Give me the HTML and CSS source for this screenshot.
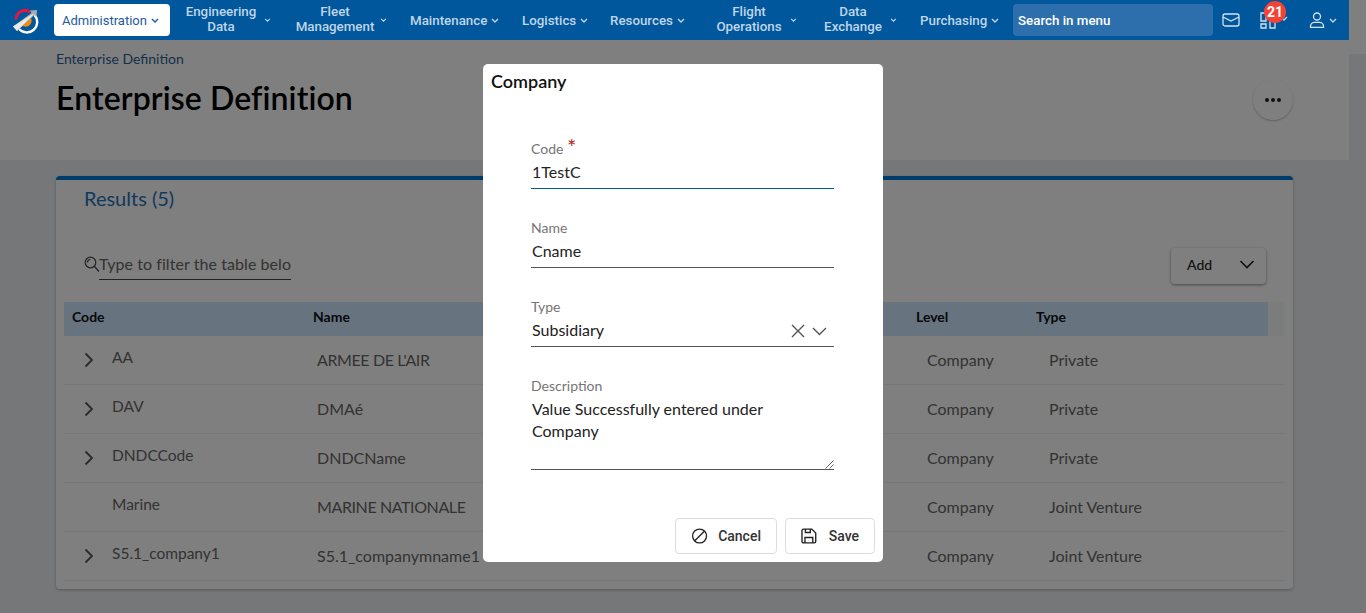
FILE: index.html
```html
<!DOCTYPE html>
<html lang="en">
<head>
<meta charset="utf-8">
<title>Enterprise Definition</title>
<link rel="stylesheet" href="styles.css">
</head>
<body>
<div class="shell">
  <div class="page">
    <nav class="nav">
      <a class="logo" aria-label="Logo">
        <svg width="28" height="28" viewBox="0 0 28 28">
          <path d="M5 13.500A9 9 0 0 1 19 6" fill="none" stroke="#e5173f" stroke-width="3"/>
          <path d="M23.500 9A9.800 9.800 0 0 1 8 23" fill="none" stroke="#fff" stroke-width="2.400"/>
          <path d="M10 18.500a6 6 0 0 0 10-6.500z" fill="#f58a07"/>
          <path d="M2 20.500 20.500 7l-1.500-2.500 7-.5-.5 7-2-2L6 25z" fill="#a9acb0"/>
          <path d="M2 20.500 20 9l3.500-1.500L6 25z" fill="#e8e9ea"/>
        </svg>
      </a>
      <a class="nav-item active">Administration<svg class="chev" viewBox="0 0 8 5"><path d="M1 1l3 3 3-3"/></svg></a>
      <a class="nav-item eng"><span class="wrap">Engineering Data</span><svg class="chev small" viewBox="0 0 8 5"><path d="M1 1l3 3 3-3"/></svg></a>
      <a class="nav-item fleet"><span class="wrap">Fleet Management</span><svg class="chev small" viewBox="0 0 8 5"><path d="M1 1l3 3 3-3"/></svg></a>
      <a class="nav-item maint">Maintenance<svg class="chev" viewBox="0 0 8 5"><path d="M1 1l3 3 3-3"/></svg></a>
      <a class="nav-item logi">Logistics<svg class="chev" viewBox="0 0 8 5"><path d="M1 1l3 3 3-3"/></svg></a>
      <a class="nav-item res">Resources<svg class="chev" viewBox="0 0 8 5"><path d="M1 1l3 3 3-3"/></svg></a>
      <a class="nav-item flight"><span class="wrap">Flight Operations</span><svg class="chev small" viewBox="0 0 8 5"><path d="M1 1l3 3 3-3"/></svg></a>
      <a class="nav-item data"><span class="wrap">Data Exchange</span><svg class="chev small" viewBox="0 0 8 5"><path d="M1 1l3 3 3-3"/></svg></a>
      <a class="nav-item purch">Purchasing<svg class="chev" viewBox="0 0 8 5"><path d="M1 1l3 3 3-3"/></svg></a>
      <div class="nav-search">Search in menu</div>
      <div class="nav-tools">
        <svg class="tool mail" width="18" height="14" viewBox="0 0 18 14"><path d="M3 1h12a2 2 0 0 1 2 2v8a2 2 0 0 1-2 2H3a2 2 0 0 1-2-2V3a2 2 0 0 1 2-2zM1 4l8 4 8-4" fill="none" stroke="#d5e3f0" stroke-width="1.300"/></svg>
        <div class="tool apps">
          <svg width="16" height="17" viewBox="0 0 16 17"><path d="M1 1h5v8H1zM10 1h5v5h-5zM1 12h5v4H1zM10 9h5v7h-5z" fill="none" stroke="#d5e3f0" stroke-width="1.300"/></svg>
          <svg class="chev apps-chev" viewBox="0 0 8 5"><path d="M1 1l3 3 3-3"/></svg>
          <span class="badge">21</span>
        </div>
        <div class="tool user">
          <svg width="16" height="16" viewBox="0 0 16 16"><circle cx="8" cy="4.500" r="3.500" fill="none" stroke="#d5e3f0" stroke-width="1.300"/><path d="M1.500 15.300v-1c0-2.500 2-4 4-4h5c2 0 4 1.500 4 4v1z" fill="none" stroke="#d5e3f0" stroke-width="1.300"/></svg>
          <svg class="chev" viewBox="0 0 8 5"><path d="M1 1l3 3 3-3"/></svg>
        </div>
      </div>
    </nav>

    <header class="head">
      <div class="crumb">Enterprise Definition</div>
      <h1 class="title">Enterprise Definition</h1>
      <button class="more" aria-label="More"><span></span><span></span><span></span></button>
    </header>

    <section class="card">
      <h2 class="results">Results (5)</h2>
      <div class="tools-row">
        <div class="filter">
          <svg width="16" height="17" viewBox="0 0 16 17"><circle cx="6.500" cy="6.500" r="5.300" fill="none" stroke="#444" stroke-width="1.200"/><path d="M3.500 6.500a3 3 0 0 1 3-3M10.500 10.500l4.500 5" fill="none" stroke="#444" stroke-width="1.200"/></svg>
          <span class="filter-input">Type to filter the table belo</span>
        </div>
        <button class="add">Add<svg width="16" height="9" viewBox="0 0 16 9"><path d="M1.500 1l6.500 6.500L14.500 1" fill="none" stroke="#222" stroke-width="1.600"/></svg></button>
      </div>
      <div class="table">
        <div class="thead">
          <span class="th c1">Code</span><span class="th c2">Name</span><span class="th c3">Level</span><span class="th c4">Type</span>
        </div>
        <div class="row"><span class="exp"><svg width="10" height="16" viewBox="0 0 10 16"><path d="M1.500 1.500 8 8l-6.500 6.500" fill="none" stroke="#555" stroke-width="1.800"/></svg></span><span class="code">AA</span><span class="name caps">ARMEE DE L'AIR</span><span class="level">Company</span><span class="kind">Private</span></div>
        <div class="row"><span class="exp"><svg width="10" height="16" viewBox="0 0 10 16"><path d="M1.500 1.500 8 8l-6.500 6.500" fill="none" stroke="#555" stroke-width="1.800"/></svg></span><span class="code">DAV</span><span class="name">DMAé</span><span class="level">Company</span><span class="kind">Private</span></div>
        <div class="row"><span class="exp"><svg width="10" height="16" viewBox="0 0 10 16"><path d="M1.500 1.500 8 8l-6.500 6.500" fill="none" stroke="#555" stroke-width="1.800"/></svg></span><span class="code">DNDCCode</span><span class="name">DNDCName</span><span class="level">Company</span><span class="kind">Private</span></div>
        <div class="row"><span class="exp"></span><span class="code">Marine</span><span class="name caps">MARINE NATIONALE</span><span class="level">Company</span><span class="kind">Joint Venture</span></div>
        <div class="row"><span class="exp"><svg width="10" height="16" viewBox="0 0 10 16"><path d="M1.500 1.500 8 8l-6.500 6.500" fill="none" stroke="#555" stroke-width="1.800"/></svg></span><span class="code">S5.1_company1</span><span class="name">S5.1_companymname1</span><span class="level">Company</span><span class="kind">Joint Venture</span></div>
      </div>
    </section>
  </div>
  <div class="gutter"></div>
</div>

<div class="overlay"></div>

<div class="modal" role="dialog">
  <h3 class="modal-title">Company</h3>
  <form class="form">
    <div class="field focus">
      <div class="label">Code <i class="req">*</i></div>
      <div class="value">1TestC</div>
    </div>
    <div class="field">
      <div class="label">Name</div>
      <div class="value">Cname</div>
    </div>
    <div class="field">
      <div class="label">Type</div>
      <div class="value select">Subsidiary
        <span class="select-icons">
          <svg width="14" height="14" viewBox="0 0 14 14"><path d="M1 1l12 12M13 1 1 13" fill="none" stroke="#555" stroke-width="1.400"/></svg>
          <svg width="15" height="9" viewBox="0 0 15 9"><path d="M1 1l6.500 6.500L14 1" fill="none" stroke="#555" stroke-width="1.400"/></svg>
        </span>
      </div>
    </div>
    <div class="field">
      <div class="label">Description</div>
      <div class="value area">Value Successfully entered under Company
        <svg class="grip" width="9" height="9" viewBox="0 0 9 9"><path d="M8.500 .5 .5 8.500M8.500 4.500l-4 4" fill="none" stroke="#666"/></svg>
      </div>
    </div>
  </form>
  <div class="actions">
    <button class="btn cancel">
      <svg width="18" height="18" viewBox="0 0 18 18"><circle cx="9" cy="9" r="7.300" fill="none" stroke="#222" stroke-width="1.400"/><path d="M14 4 4 14" stroke="#222" stroke-width="1.400"/></svg>Cancel</button>
    <button class="btn save">
      <svg width="16" height="16" viewBox="0 0 16 16"><path d="M1 2.500A1.500 1.500 0 0 1 2.500 1H11l4 4v8.500a1.500 1.500 0 0 1-1.500 1.500h-11A1.500 1.500 0 0 1 1 13.500zM4 15V9.500h8V15M4.500 1v3.500h5V1" fill="none" stroke="#222" stroke-width="1.400"/></svg>Save</button>
  </div>
</div>
</body>
</html>
```

FILE: styles.css
```css
* { box-sizing: border-box; }
html, body { margin: 0; height: 613px; overflow: hidden; }
body { font-family: "Lato", "Liberation Sans", sans-serif; color: #222; background: #eaeef2; }

.shell { display: flex; height: 613px; }
.page { width: 1349px; flex: none; height: 613px; overflow: hidden; }
.gutter { flex: 1; height: 54px; background: #fff; }

/* top navigation (stays above the dim layer) */
.nav {
  position: relative; z-index: 3;
  display: flex; align-items: center;
  width: 1349px; height: 40px; padding-left: 11px;
  background: #01579b;
  font: 500 13.333px/15px "Roboto", "Liberation Sans", sans-serif;
  color: #bfd5e9;
}
.logo { display: flex; width: 43px; flex: none; }
.nav-item { display: flex; align-items: center; flex: none; height: 32px; white-space: nowrap; }
.wrap { display: block; width: 100px; margin-bottom: 2px; white-space: normal; text-align: center; }
.chev { width: 8px; height: 5px; margin-left: 4px; fill: none; stroke: currentColor; stroke-width: 1.400; flex: none; }
.chev.small { width: 7px; height: 4px; }
.active { width: 116px; padding-left: 8px; background: #fff; color: #1e5aa0; border-radius: 4px; font-size: 13px; font-weight: 400; }
.eng { width: 115px; padding-left: 1px; }
.eng .chev { margin-left: -7px; }
.fleet { width: 125px; padding-left: 0; }
.fleet .chev { margin-left: -5px; }
.maint { width: 112px; }
.logi { width: 88px; }
.res { width: 106px; }
.flight { width: 107px; }
.flight .wrap { width: 66px; }
.flight .chev { margin-left: 8px; }
.data { width: 97px; }
.data .wrap { width: 60px; }
.data .chev { margin-left: 7px; }
.purch { width: 93px; }
.nav-search {
  width: 200px; height: 32px; flex: none; padding-left: 5px;
  display: flex; align-items: center;
  background: #2d6fad; color: #fff; border-radius: 4px;
}
.nav-tools { display: flex; align-items: center; flex: 1; }
.tool { flex: none; }
.mail { margin-left: 9px; }
.apps { position: relative; display: flex; align-items: center; margin-left: 20px; }
.apps-chev { margin-left: 4px; margin-top: -4px; }
.badge {
  position: absolute; left: 4px; top: -11px;
  width: 22px; height: 22px; border-radius: 50%;
  background: #f44336; color: #fff;
  font: 700 14px/22px "Roboto", sans-serif; text-align: center;
}
.user { display: flex; align-items: center; margin-left: 21px; }
.user .chev { margin-left: 4px; }

/* page header */
.head { position: relative; height: 120px; background: #fff; padding: 10px 56px 0; }
.crumb { font-size: 14px; line-height: 18px; color: #2b5f96; }
.title { margin: 10px 0 0; font-size: 32px; line-height: 40px; font-weight: 600; letter-spacing: .1px; color: #000; }
.more {
  position: absolute; left: 1253px; top: 40px;
  display: flex; align-items: center; justify-content: center; gap: 2px;
  width: 40px; height: 40px; padding: 0; border: 0; border-radius: 50%;
  background: #fff; box-shadow: 0 1px 2px rgba(0,0,0,.25);
}
.more span { width: 4px; height: 4px; border-radius: 50%; background: #222; }

/* results card */
.card {
  margin: 16px 0 0 56px; width: 1237px; height: 413px;
  background: #fff; border-top: 4px solid #0178d4; border-radius: 4px;
  box-shadow: 0 1px 3px rgba(0,0,0,.25);
  padding: 0 8px;
}
.results { margin: 6px 0 0 20px; font-size: 20px; line-height: 24px; font-weight: 400; color: #1f74b8; }
.tools-row { display: flex; justify-content: space-between; align-items: flex-start; margin-top: 38px; padding: 0 19px 0 20px; }
.filter { display: flex; padding-top: 5px; }
.filter svg { margin-top: 3px; }
.filter-input { display: block; width: 192px; height: 27px; margin-top: 0; margin-left: -1px; white-space: nowrap; font-size: 16px; line-height: 22px; letter-spacing: .07px; color: #666; border-bottom: 1px solid #444; }
.add {
  display: flex; align-items: center; justify-content: space-between;
  width: 95px; height: 36px; padding: 0 11px 3px 16px; border: 0; border-radius: 4px;
  background: #fff; box-shadow: 0 1px 3px rgba(0,0,0,.45);
  font: 500 14px "Lato", sans-serif; color: #222;
}
.table { margin-top: 18px; width: 1221px; }
.thead {
  display: flex; height: 34px; padding-bottom: 6px; align-items: center; width: 1221px;
  background: linear-gradient(to right, #cee6ff 1204px, #f6f9f9 1204px);
}
.th { font-size: 14px; font-weight: 700; color: #111; }
.th.c1 { width: 241px; margin-left: 8px; }
.th.c2 { width: 603px; }
.th.c3 { width: 120px; }
.row {
  display: flex; height: 49px; padding-bottom: 2px; align-items: center; border-bottom: 1px solid #eee;
  font-size: 16px; color: #666;
}
.exp { display: flex; width: 48px; margin-top: 2px; padding-left: 20px; flex: none; }
.code { width: 205px; flex: none; font-size: 15.500px; margin-top: -5px; }
.name { width: 610px; flex: none; }
.caps { letter-spacing: -.4px; }
.level { width: 122px; flex: none; }

/* dim layer */
.overlay { position: fixed; inset: 0; z-index: 2; background: rgba(0,0,0,.5); }

/* dialog */
.modal {
  position: fixed; z-index: 4; left: 483px; top: 64px;
  width: 400px; height: 498px; padding: 8px;
  background: #fff; border-radius: 5px;
}
.modal-title { margin: -1px 0 0; font-size: 18px; line-height: 20px; font-weight: 600; color: #111; }
.form { padding: 49px 41px 0 40px; }
.field { height: 79px; }
.label { font-size: 14px; line-height: 18px; color: #757575; }
.req { position: relative; top: 1px; font-style: normal; font-size: 22px; line-height: 10px; color: #b71c1c; }
.value {
  position: relative; height: 31px; padding: 3px 0 0 1px;
  font-size: 16px; line-height: 22px; color: #222;
  border-bottom: 1px solid #555;
}
.focus .value { border-bottom-color: #01579b; }
.select-icons { position: absolute; right: 7px; top: 8px; display: flex; align-items: center; gap: 7px; }
.area { height: 75px; padding-right: 50px; }
.grip { position: absolute; right: 0; bottom: 0; }
.actions { position: absolute; right: 8px; bottom: 8px; display: flex; gap: 8px; }
.btn {
  display: flex; align-items: center; height: 36px; padding: 0 15px;
  border: 1px solid #ddd; border-radius: 4px; background: #fff;
  font: 500 14px "Roboto", sans-serif; color: #333;
}
.cancel { width: 102px; gap: 10px; }
.save { width: 90px; gap: 12px; }
```
